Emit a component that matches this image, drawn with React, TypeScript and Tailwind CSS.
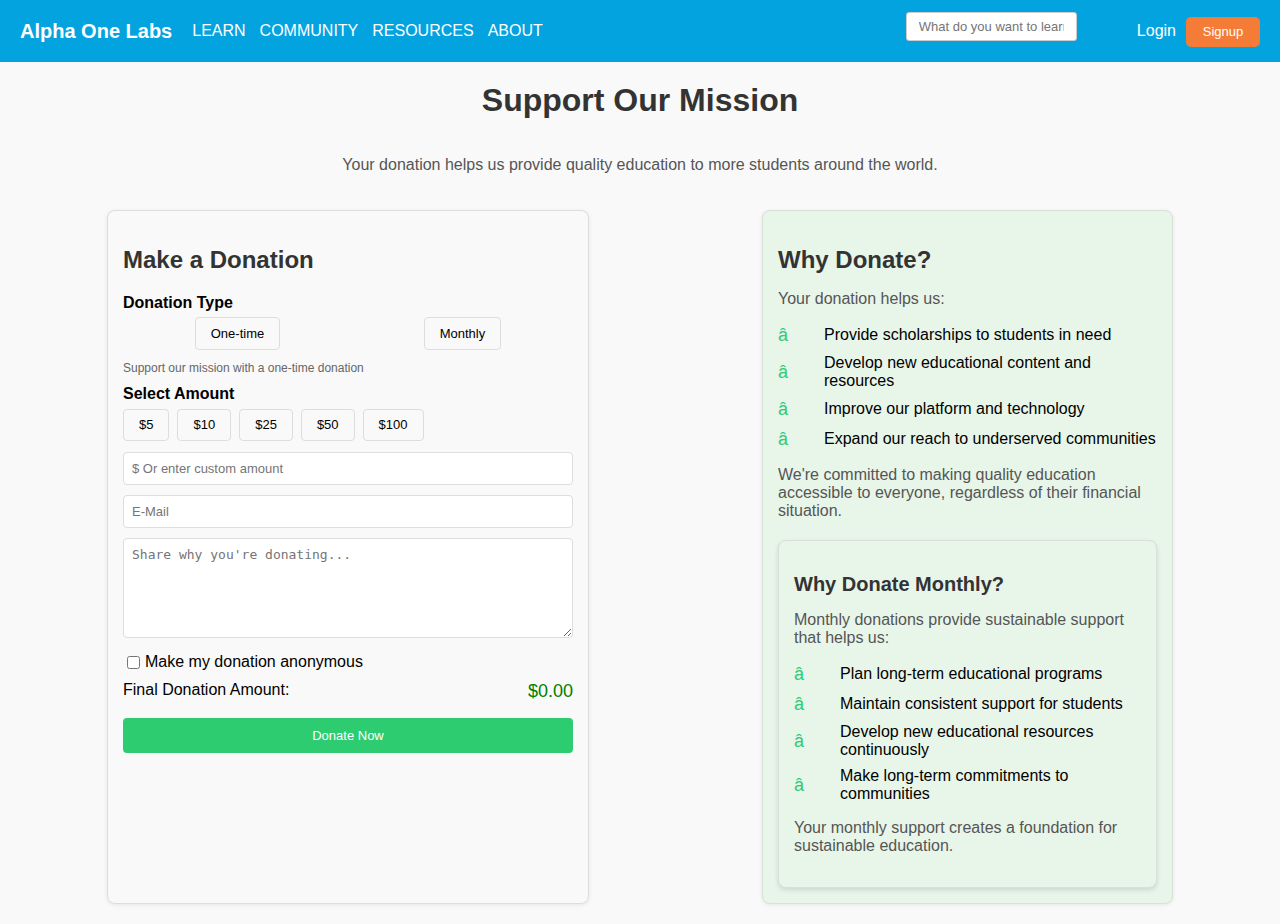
import React from 'react';

const font = { fontFamily: '"Liberation Sans", Arial, sans-serif' };

const navLinks = ['LEARN', 'COMMUNITY', 'RESOURCES', 'ABOUT'];
const amounts = ['$5', '$10', '$25', '$50', '$100'];

const whyItems = [
  'Provide scholarships to students in need',
  'Develop new educational content and resources',
  'Improve our platform and technology',
  'Expand our reach to underserved communities',
];

const monthlyItems = [
  'Plan long-term educational programs',
  'Maintain consistent support for students',
  'Develop new educational resources continuously',
  'Make long-term commitments to communities',
];

function BenefitList({ items }: { items: string[] }) {
  return (
    <ul className="my-3">
      {items.map((item) => (
        <li key={item} className="flex items-center py-1">
          <span className="w-[46px] shrink-0 text-[18px] leading-[22px] text-[#2ecc71]">â</span>
          <span className="text-[16px] leading-[18px] text-black">{item}</span>
        </li>
      ))}
    </ul>
  );
}

export default function App() {
  return (
    <div className="min-h-[924px] bg-[#f9f9f9] text-[#333]" style={font}>
      {/* navbar */}
      <header className="flex h-[62px] items-center bg-[#03a3e0] px-5 text-white">
        <div className="text-[20px] font-bold">Alpha One Labs</div>
        <nav className="ml-5 flex gap-[14px] text-[16px]">
          {navLinks.map((l) => (
            <span key={l}>{l}</span>
          ))}
        </nav>
        <div className="ml-auto flex items-center">
          <input
            className="mb-[9px] h-[29px] w-[171px] rounded-[3px] border border-[#ccc] bg-white px-3 text-[13px] text-[#333] outline-none placeholder:text-[#757575]"
            placeholder="What do you want to learn?"
          />
          <span className="ml-[60px] text-[16px]">Login</span>
          <button className="ml-[10px] mt-[1px] h-[30px] w-[74px] rounded-[5px] bg-[#f47c36] text-[13px] text-white">
            Signup
          </button>
        </div>
      </header>

      <h1 className="mt-[20px] text-center text-[32px] font-bold leading-[37px] text-[#333]">Support Our Mission</h1>
      <p className="mt-[37px] text-center text-[16px] leading-[18px] text-[#555]">
        Your donation helps us provide quality education to more students around the world.
      </p>

      <div className="ml-[107px] mt-[36px] flex w-[1066px] justify-between pb-[21px]">
        {/* left card */}
        <div className="w-[482px] rounded-lg border border-[#ddd] bg-[#f9f9f9] px-[15px] pt-[35px] pb-[15px] shadow-[0_1px_4px_rgba(0,0,0,0.08)]">
          <h2 className="text-[24px] font-bold leading-[28px] text-[#333]">Make a Donation</h2>
          <div className="mt-[20px] text-[16px] font-bold leading-[18px] text-black">Donation Type</div>
          <div className="mt-[5px] flex justify-around">
            <button className="h-[33px] rounded border border-[#ddd] bg-[#f9f9f9] px-[15px] text-[13px] text-black">One-time</button>
            <button className="h-[33px] rounded border border-[#ddd] bg-[#f9f9f9] px-[15px] text-[13px] text-black">Monthly</button>
          </div>
          <p className="mt-[11px] text-[12px] leading-[14px] text-[#666]">Support our mission with a one-time donation</p>
          <div className="mt-[10px] text-[16px] font-bold leading-[18px] text-black">Select Amount</div>
          <div className="mt-[6px] flex gap-2">
            {amounts.map((a) => (
              <button key={a} className="h-[32px] rounded border border-[#ddd] bg-[#f9f9f9] px-[15px] text-[13px] text-black">
                {a}
              </button>
            ))}
          </div>
          <input
            className="mt-[11px] block h-[33px] w-full rounded border border-[#ddd] bg-white px-2 text-[13px] outline-none placeholder:text-[#757575]"
            placeholder="$ Or enter custom amount"
          />
          <input
            className="mt-[10px] block h-[33px] w-full rounded border border-[#ddd] bg-white px-2 text-[13px] outline-none placeholder:text-[#757575]"
            placeholder="E-Mail"
          />
          <textarea
            className="mt-[10px] block h-[100px] w-full rounded border border-[#ddd] bg-white px-2 py-[6px] text-[13px] outline-none placeholder:text-[#757575]"
            style={{ fontFamily: '"DejaVu Sans Mono", "Liberation Mono", monospace' }}
            placeholder="Share why you're donating..."
          />
          <label className="mt-[15px] flex items-center text-[16px] leading-[18px] text-black">
            <input type="checkbox" className="ml-[4px] mr-[5px] h-[13px] w-[13px]" />
            Make my donation anonymous
          </label>
          <div className="mt-[10px] flex items-start justify-between text-black">
            <span className="text-[16px] leading-[18px]">Final Donation Amount:</span>
            <span className="text-[18px] leading-[21px] text-[#008000]">$0.00</span>
          </div>
          <button className="mt-[16px] h-[35px] w-full rounded bg-[#2ecc71] text-[13px] text-white">Donate Now</button>
        </div>

        {/* right card */}
        <div className="w-[411px] rounded-lg border border-[#d9dfd9] bg-[#e8f5e9] px-[15px] pt-[35px] pb-[15px] shadow-[0_1px_4px_rgba(0,0,0,0.08)]">
          <h2 className="text-[24px] font-bold leading-[28px] text-[#333]">Why Donate?</h2>
          <p className="mt-[16px] text-[16px] leading-[18px] text-[#555]">Your donation helps us:</p>
          <BenefitList items={whyItems} />
          <p className="text-[16px] leading-[18px] text-[#555]">
            We're committed to making quality education accessible to everyone, regardless of their financial situation.
          </p>

          <div className="mt-[20px] rounded-lg border border-[#d9dfd9] bg-[#e8f5e9] px-[15px] pt-[32px] pb-[32px] shadow-[0_2px_5px_rgba(0,0,0,0.12)]">
            <h3 className="text-[20px] font-bold leading-[23px] text-[#333]">Why Donate Monthly?</h3>
            <p className="mt-[15px] text-[16px] leading-[18px] text-[#555]">
              Monthly donations provide sustainable support that helps us:
            </p>
            <BenefitList items={monthlyItems} />
            <p className="text-[16px] leading-[18px] text-[#555]">
              Your monthly support creates a foundation for sustainable education.
            </p>
          </div>
        </div>
      </div>
    </div>
  );
}
